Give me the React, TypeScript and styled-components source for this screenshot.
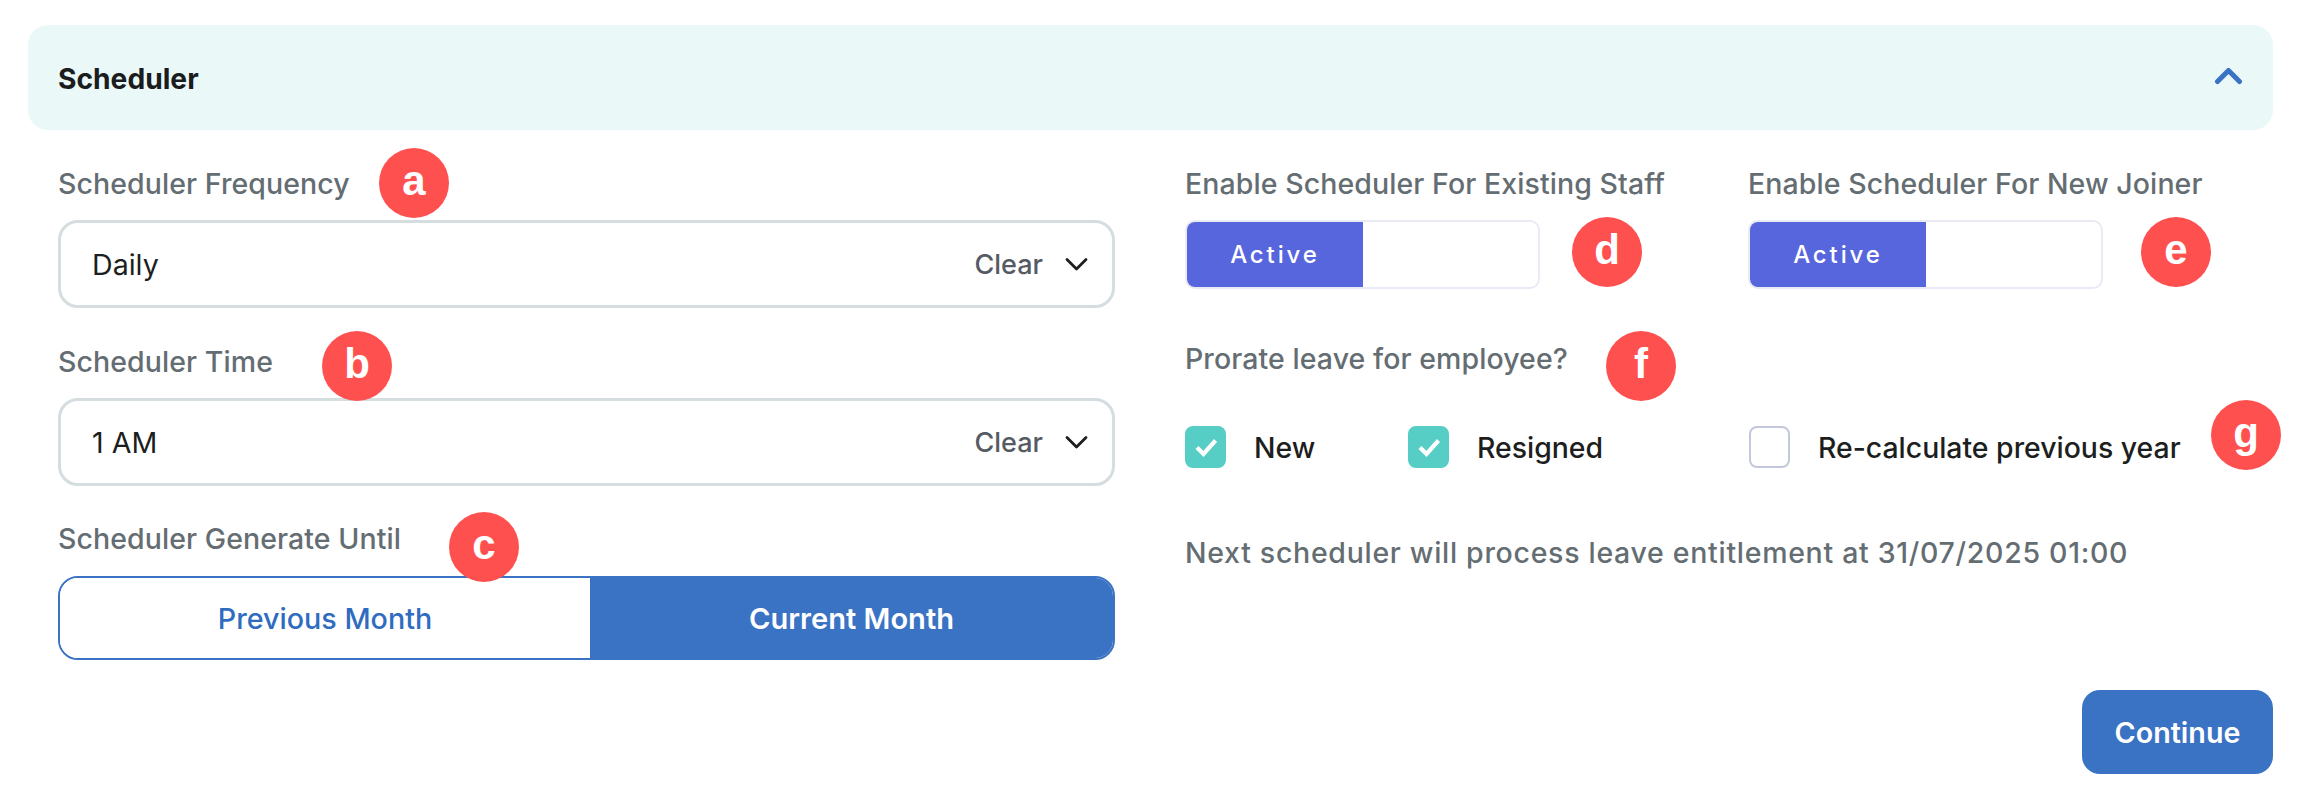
import React from "react";
import styled, { createGlobalStyle } from "styled-components";

const Global = createGlobalStyle`
  html, body { margin: 0; padding: 0; background: #fff; }
  body { font-family: "Inter", "Liberation Sans", sans-serif; }
`;

const Page = styled.div`
  position: relative;
  width: 2319px;
  height: 802px;
  box-sizing: border-box;
  padding: 25px 46px 0 28px;
  overflow: hidden;
`;

const Header = styled.div`
  height: 105px;
  box-sizing: border-box;
  padding: 0 29px 0 30px;
  border-radius: 20px;
  background: #eaf9f8;
  display: flex;
  align-items: center;
  justify-content: space-between;
`;

const Title = styled.div`
  font-size: 28.2px;
  font-weight: 700;
  color: #1a1c1e;
  padding-top: 2px;
`;

const Body = styled.div`
  display: grid;
  grid-template-columns: 1057px 1fr;
  column-gap: 70px;
  padding: 34px 0 0 30px;
`;

const Column = styled.div`
  display: flex;
  flex-direction: column;
`;

const Label = styled.div<{ $top?: number }>`
  height: 40px;
  line-height: 40px;
  margin-top: ${(p) => p.$top ?? 0}px;
  margin-bottom: 16px;
  font-size: 28.5px;
  font-weight: 500;
  letter-spacing: 0.08px;
  color: #646d72;
  white-space: nowrap;
`;

const Select = styled.div`
  height: 88px;
  box-sizing: border-box;
  border: 3px solid #d5dde0;
  border-radius: 20px;
  padding: 0 24px 0 31px;
  display: flex;
  align-items: center;
`;

const SelectValue = styled.div`
  flex: 1;
  font-size: 28.6px;
  font-weight: 400;
  color: #1c1e20;
`;

const Clear = styled.div`
  font-size: 27px;
  font-weight: 500;
  color: #555a63;
  margin-right: 22px;
`;

const Segmented = styled.div`
  margin-top: 1px;
  height: 84px;
  box-sizing: border-box;
  border: 2.5px solid #3a72c4;
  border-radius: 20px;
  overflow: hidden;
  display: grid;
  grid-template-columns: 530px 1fr;
`;

const Segment = styled.div<{ $on?: boolean }>`
  display: flex;
  align-items: center;
  justify-content: center;
  font-size: ${(p) => (p.$on ? 29.1 : 28.7)}px;
  font-weight: ${(p) => (p.$on ? 600 : 500)};
  background: ${(p) => (p.$on ? "#3a72c4" : "#fff")};
  color: ${(p) => (p.$on ? "#fff" : "#2f6cc0")};
`;

const ToggleRow = styled.div`
  display: grid;
  grid-template-columns: 563px 1fr;
`;

const Toggle = styled.div`
  width: 355px;
  height: 69px;
  box-sizing: border-box;
  border: 2px solid #e9eaf3;
  border-radius: 10px;
  overflow: hidden;
  display: flex;
`;

const ToggleOn = styled.div`
  width: 176px;
  background: #5766dd;
  color: #fff;
  font-size: 24px;
  font-weight: 500;
  letter-spacing: 2.9px;
  display: flex;
  align-items: center;
  justify-content: center;
`;

const CheckRow = styled.div`
  display: grid;
  grid-template-columns: 223px 341px 1fr;
  margin-top: 31px;
`;

const CheckItem = styled.div`
  display: flex;
  align-items: center;
  gap: 28px;
  height: 42px;
`;

const Box = styled.div<{ $on?: boolean }>`
  width: 41px;
  height: 42px;
  box-sizing: border-box;
  border-radius: 8px;
  border: 2px solid ${(p) => (p.$on ? "#57cec5" : "#c3c8dc")};
  background: ${(p) => (p.$on ? "#57cec5" : "#fff")};
  display: flex;
  align-items: center;
  justify-content: center;
`;

const CheckText = styled.div`
  font-size: 28.4px;
  font-weight: 500;
  color: #1c1e20;
  white-space: nowrap;
`;

const Note = styled.div`
  margin-top: 65px;
  height: 40px;
  line-height: 40px;
  font-size: 28.5px;
  font-weight: 500;
  letter-spacing: 0.7px;
  color: #646d72;
  white-space: nowrap;
`;

const Footer = styled.div`
  display: flex;
  justify-content: flex-end;
  margin-top: 117px;
`;

const Continue = styled.div`
  width: 191px;
  height: 84px;
  border-radius: 18px;
  background: #3a72c4;
  color: #fff;
  font-size: 28.7px;
  font-weight: 600;
  display: flex;
  align-items: center;
  justify-content: center;
`;

const Badge = styled.div<{ $x: number; $y: number }>`
  position: absolute;
  left: ${(p) => p.$x - 35}px;
  top: ${(p) => p.$y - 35}px;
  width: 70px;
  height: 70px;
  border-radius: 50%;
  background: #ff5050;
  color: #fff;
  font-family: "Liberation Sans", Arial, sans-serif;
  font-size: 42px;
  font-weight: 700;
  line-height: 66px;
  text-align: center;
`;

const Chevron = ({ up }: { up?: boolean }) => (
  <svg width={up ? 30 : 23} height={up ? 19 : 15} viewBox={up ? "0 0 30 19" : "0 0 23 15"} fill="none">
    {up ? (
      <path d="M3.5 13.5 14.5 2.5 25.5 13.5" stroke="#3a72c4" strokeWidth="5" strokeLinecap="round" strokeLinejoin="round" />
    ) : (
      <path d="M2 2.5 11.5 12 21 2.5" stroke="#1c1e20" strokeWidth="2.8" strokeLinecap="round" strokeLinejoin="round" />
    )}
  </svg>
);

const Tick = () => (
  <svg width="26" height="22" viewBox="0 0 26 22" fill="none">
    <path d="M4 11.5 10.5 18 22.5 4.5" stroke="#fff" strokeWidth="4.2" />
  </svg>
);

export default function App() {
  return (
    <Page>
      <Global />
      <Header>
        <Title>Scheduler</Title>
        <Chevron up />
      </Header>
      <Body>
        <Column>
          <Label>Scheduler Frequency</Label>
          <Select>
            <SelectValue>Daily</SelectValue>
            <Clear>Clear</Clear>
            <Chevron />
          </Select>
          <Label $top={34}>Scheduler Time</Label>
          <Select>
            <SelectValue>1 AM</SelectValue>
            <Clear>Clear</Clear>
            <Chevron />
          </Select>
          <Label $top={33}>Scheduler Generate Until</Label>
          <Segmented>
            <Segment>Previous Month</Segment>
            <Segment $on>Current Month</Segment>
          </Segmented>
        </Column>
        <Column>
          <ToggleRow>
            <Column>
              <Label>Enable Scheduler For Existing Staff</Label>
              <Toggle>
                <ToggleOn>Active</ToggleOn>
              </Toggle>
            </Column>
            <Column>
              <Label>Enable Scheduler For New Joiner</Label>
              <Toggle>
                <ToggleOn>Active</ToggleOn>
              </Toggle>
            </Column>
          </ToggleRow>
          <Label $top={50}>Prorate leave for employee?</Label>
          <CheckRow>
            <CheckItem>
              <Box $on><Tick /></Box>
              <CheckText>New</CheckText>
            </CheckItem>
            <CheckItem>
              <Box $on><Tick /></Box>
              <CheckText>Resigned</CheckText>
            </CheckItem>
            <CheckItem>
              <Box />
              <CheckText>Re-calculate previous year</CheckText>
            </CheckItem>
          </CheckRow>
          <Note>Next scheduler will process leave entitlement at 31/07/2025 01:00</Note>
          <Footer>
            <Continue>Continue</Continue>
          </Footer>
        </Column>
      </Body>
      <Badge $x={414} $y={183}>a</Badge>
      <Badge $x={357} $y={366}>b</Badge>
      <Badge $x={484} $y={547}>c</Badge>
      <Badge $x={1607} $y={252}>d</Badge>
      <Badge $x={2176} $y={252}>e</Badge>
      <Badge $x={1641} $y={366}>f</Badge>
      <Badge $x={2246} $y={435}>g</Badge>
    </Page>
  );
}
